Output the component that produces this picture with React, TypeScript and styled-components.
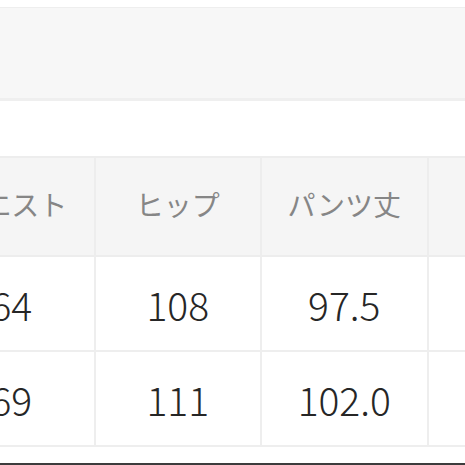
import * as React from 'react'
import styled, { createGlobalStyle } from 'styled-components'

const rows = [
  { label: 'ウエスト', values: ['64', '69'] },
  { label: 'ヒップ', values: ['108', '111'] },
  { label: 'パンツ丈', values: ['97.5', '102.0'] },
  { label: '股下', values: ['76', '78'] },
]

const App = () => {
  return (
    <Page>
      <GlobalStyle />
      <TopBar />
      <TableWrap>
        <SizeTable>
          <thead>
            <tr>
              {rows.map((col) => (
                <HeadCell key={col.label}>{col.label}</HeadCell>
              ))}
            </tr>
          </thead>
          <tbody>
            {[0, 1].map((i) => (
              <tr key={i}>
                {rows.map((col) => (
                  <BodyCell key={col.label}>{col.values[i]}</BodyCell>
                ))}
              </tr>
            ))}
          </tbody>
        </SizeTable>
      </TableWrap>
      <BottomEdge />
    </Page>
  )
}

export default App

// Styles

const GlobalStyle = createGlobalStyle`
  html, body {
    margin: 0;
    padding: 0;
    background: #fff;
  }
  body {
    font-family: "Noto Sans CJK JP", "Noto Sans", sans-serif;
  }
`

const Page = styled.div`
  width: 465px;
  height: 465px;
  overflow: hidden;
  display: flex;
  flex-direction: column;
  background: #fff;
`

const TopBar = styled.div`
  margin-top: 7px;
  height: 90px;
  background: #f7f7f7;
  border-top: 1px solid #eeeeee;
  border-bottom: 3px solid #efefef;
  flex-shrink: 0;
`

const TableWrap = styled.div`
  margin-top: 55px;
  overflow: hidden;
  flex-shrink: 0;
`

const SizeTable = styled.table`
  margin-left: -73px;
  border-collapse: collapse;
  table-layout: fixed;
  width: 668px;
`

const HeadCell = styled.th`
  box-sizing: border-box;
  height: 99px;
  padding: 0 0 6px;
  background: #f5f5f5;
  border: 2px solid #ededed;
  color: #868686;
  font-size: 28px;
  font-weight: 400;
  text-align: center;
  vertical-align: middle;
  white-space: nowrap;
`

const BodyCell = styled.td`
  box-sizing: border-box;
  height: 95px;
  padding: 0;
  background: #fff;
  border: 2px solid #eeeeee;
  color: #262626;
  font-size: 39px;
  font-weight: 300;
  text-align: center;
  vertical-align: middle;
`

const BottomEdge = styled.div`
  margin-top: auto;
  height: 2px;
  background: #3c3c3c;
  flex-shrink: 0;
`
